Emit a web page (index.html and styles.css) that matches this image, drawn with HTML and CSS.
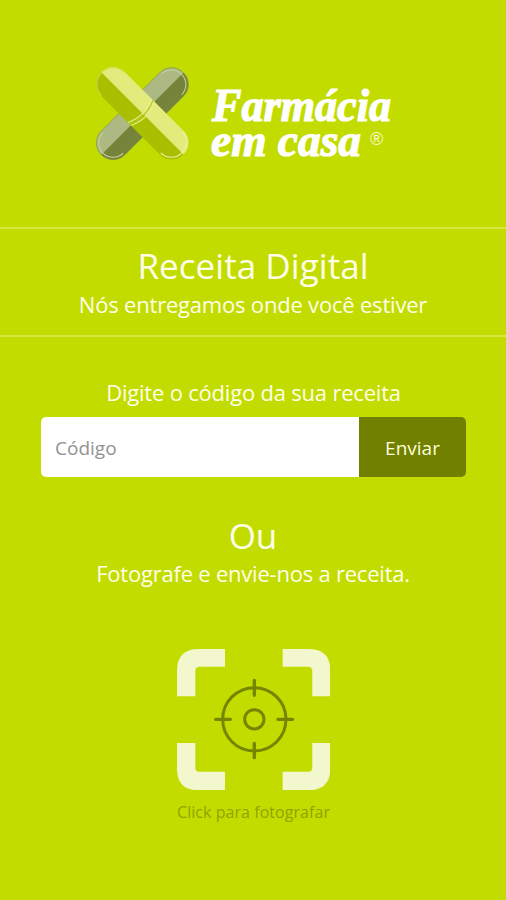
FILE: index.html
```html
<!DOCTYPE html>
<html lang="pt-BR">
<head>
<meta charset="utf-8">
<title>Farmácia em casa</title>
<link rel="stylesheet" href="styles.css">
</head>
<body>
<main class="screen">
  <header class="brand">
    <svg class="brand-mark" viewBox="0 0 345 345" aria-hidden="true">
      <defs>
        <clipPath id="pill"><rect x="-175" y="-51" width="350" height="102" rx="51"/></clipPath>
      </defs>
      <g transform="translate(172 176) rotate(-45)">
        <g clip-path="url(#pill)">
          <rect x="-175" y="-51" width="350" height="52" fill="#adb983"/>
          <rect x="-175" y="0" width="350" height="51" fill="#75843a"/>
        </g>
        <rect x="-174" y="-50" width="348" height="100" rx="50" fill="none" stroke="#8c9b44" stroke-width="2"/>
        <path d="M124-43A43 43 0 0 1 124 43M-124-43A43 43 0 0 0-124 43" fill="none" stroke="#c7d19b" stroke-width="3"/>
      </g>
      <g transform="translate(172 175) rotate(45)">
        <g clip-path="url(#pill)">
          <rect x="-175" y="-51" width="350" height="52" fill="#e2eb7c"/>
          <rect x="-175" y="0" width="350" height="51" fill="#a9c000"/>
        </g>
        <path d="M-124-49A49 49 0 0 0-124 49" fill="none" stroke="#d3df4d" stroke-width="3"/>
        <path d="M123-45A45 45 0 0 1 123 45" fill="none" stroke="#edf3a6" stroke-width="3"/>
        <path d="M-5-50Q18 0-5 50" fill="none" stroke="#b5ca22" stroke-width="4"/>
        <path d="M-11-50Q12 0-11 50M2-50Q25 0 2 50" fill="none" stroke="#e8f08e" stroke-width="3"/>
      </g>
    </svg>
    <svg class="brand-name" viewBox="0 0 205 95">
      <g class="wordmark">
        <text x="12" y="46" textLength="179" lengthAdjust="spacingAndGlyphs">Farmácia</text>
        <text x="11" y="81" textLength="150" lengthAdjust="spacingAndGlyphs">em casa</text>
      </g>
      <text class="registered" x="170" y="70">®</text>
    </svg>
  </header>

  <section class="intro">
    <h1 class="title">Receita Digital</h1>
    <p class="lead">Nós entregamos onde você estiver</p>
  </section>

  <form class="code-form">
    <label class="code-label" for="code">Digite o código da sua receita</label>
    <div class="field">
      <input class="code-input" id="code" type="text" placeholder="Código">
      <button class="send" type="button">Enviar</button>
    </div>
  </form>

  <section class="alternative">
    <h2 class="or">Ou</h2>
    <p class="hint">Fotografe e envie-nos a receita.</p>
  </section>

  <div class="capture">
    <svg class="capture-icon" viewBox="36 28 460 424" aria-hidden="true">
      <path fill="#f2f7cd" d="M36 170V92Q36 28 102 28H180V81H104Q91 81 91 94V170ZM353 28H430Q496 28 496 92V170H442V94Q442 81 429 81H353ZM36 310H91V384Q91 396 103 396H180V452H102Q36 452 36 387ZM442 310H496V387Q496 452 430 452H353V396H430Q442 396 442 384Z"/>
      <g fill="none" stroke="#748500" stroke-width="9" stroke-linecap="round">
        <circle cx="268" cy="239" r="95"/>
        <circle cx="268" cy="239" r="29"/>
        <path stroke-width="10" d="M268 122V167M268 311V354M152 239H196M339 239H383"/>
      </g>
    </svg>
    <span class="capture-label">Click para fotografar</span>
  </div>
</main>
</body>
</html>
```

FILE: styles.css
```css
* { box-sizing: border-box; }

body {
  margin: 0;
  background: #c3dc00;
  color: #fdffe9;
  font-family: "Open Sans", "Noto Sans", sans-serif;
}

h1, h2, p { margin: 0; font-weight: 400; }

.screen {
  display: flex;
  flex-direction: column;
  width: 506px;
  height: 900px;
  overflow: hidden;
}

.brand {
  display: flex;
  height: 227px;
  padding: 55px 0 0 85px;
}

.brand-mark { width: 115px; height: 115px; }

.brand-name {
  width: 205px;
  height: 95px;
  margin-top: 20px;
  overflow: visible;
}

.wordmark {
  fill: #fff;
  stroke: #fff;
  stroke-width: 1.2px;
  font: italic 700 46px "Liberation Serif", serif;
}

.registered {
  fill: #f5fac8;
  font: 400 18px "Liberation Sans", sans-serif;
}

.intro {
  height: 110px;
  padding-top: 13px;
  border-top: 2px solid #d6e743;
  border-bottom: 2px solid #d6e743;
  text-align: center;
}

.title { font-size: 35px; line-height: 48px; letter-spacing: 0.05px; }

.lead {
  margin-top: -1px;
  font-size: 22px;
  line-height: 30px;
  letter-spacing: -0.2px;
}

.code-form { padding: 40px 40px 0 41px; }

.code-label {
  display: block;
  height: 40px;
  font-size: 22px;
  line-height: 30px;
  letter-spacing: -0.2px;
  text-align: center;
}

.field { display: flex; height: 60px; }

.code-input {
  width: 318px;
  padding: 2px 14px 0;
  border: 0;
  border-radius: 5px 0 0 5px;
  background: #fff;
  font: 19px "Open Sans", sans-serif;
}

.code-input::placeholder { color: #929292; opacity: 1; }

.send {
  flex: 1;
  padding: 2px 0 0;
  border: 0;
  border-radius: 0 5px 5px 0;
  background: #728000;
  color: #fbffd9;
  font: 19px "Open Sans", sans-serif;
}

.alternative { padding-top: 35px; text-align: center; }

.or { font-size: 35px; line-height: 48px; }

.hint {
  margin-top: -2px;
  font-size: 22px;
  line-height: 30px;
  letter-spacing: -0.22px;
}

.capture {
  display: flex;
  flex-direction: column;
  align-items: center;
  padding: 61px 0 0 1px;
}

.capture-icon { width: 153.300px; height: 141.300px; }

.capture-label {
  margin-top: 10px;
  color: #8fa400;
  font-size: 16px;
  line-height: 24px;
  letter-spacing: 0.05px;
}
```
